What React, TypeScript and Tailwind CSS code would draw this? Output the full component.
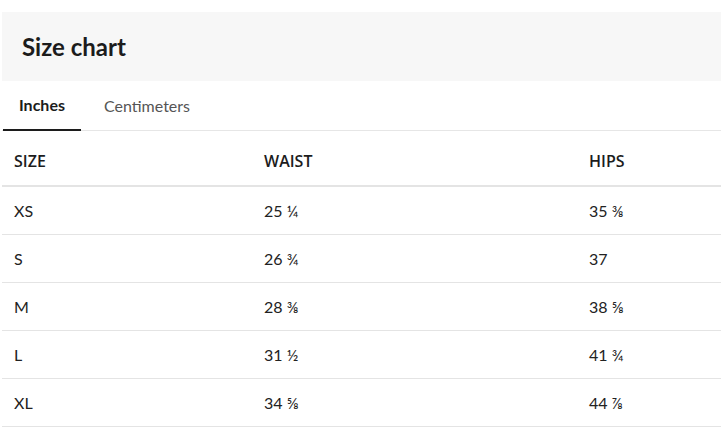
const rows = [
  ["XS", "25 ¼", "35 ⅜"],
  ["S", "26 ¾", "37"],
  ["M", "28 ⅜", "38 ⅝"],
  ["L", "31 ½", "41 ¾"],
  ["XL", "34 ⅝", "44 ⅞"],
];

export default function App() {
  return (
    <div className="bg-white pt-3 pl-[2px] text-[#222] font-['Lato','Open_Sans',sans-serif]">
      <div className="flex h-[69px] items-center bg-[#f7f7f7] px-5">
        <h2 className="text-[24px] font-bold text-[#1c1c1c]">Size chart</h2>
      </div>

      <div className="flex h-[50px] border-b border-[#e6e6e6]">
        <button className="-mb-px ml-px border-b-2 border-[#1c1c1c] px-4 text-[16px] font-bold text-[#1c1c1c]">
          Inches
        </button>
        <button className="ml-[7px] px-4 text-[16px] text-[#555]">Centimeters</button>
      </div>

      <div className="grid h-[56px] grid-cols-[250px_325px_1fr] items-center border-b-2 border-[#e4e4e4] pt-[6px] font-['Open_Sans',sans-serif] text-[16px] font-semibold text-[#1c1c1c]">
        <div className="px-3">SIZE</div>
        <div className="px-3">WAIST</div>
        <div className="px-3">HIPS</div>
      </div>

      {rows.map(([size, waist, hips]) => (
        <div
          key={size}
          className="grid h-[48px] grid-cols-[250px_325px_1fr] items-center border-b border-[#e4e4e4] text-[16px]"
        >
          <div className="px-3">{size}</div>
          <div className="px-3">{waist}</div>
          <div className="px-3">{hips}</div>
        </div>
      ))}
    </div>
  );
}
